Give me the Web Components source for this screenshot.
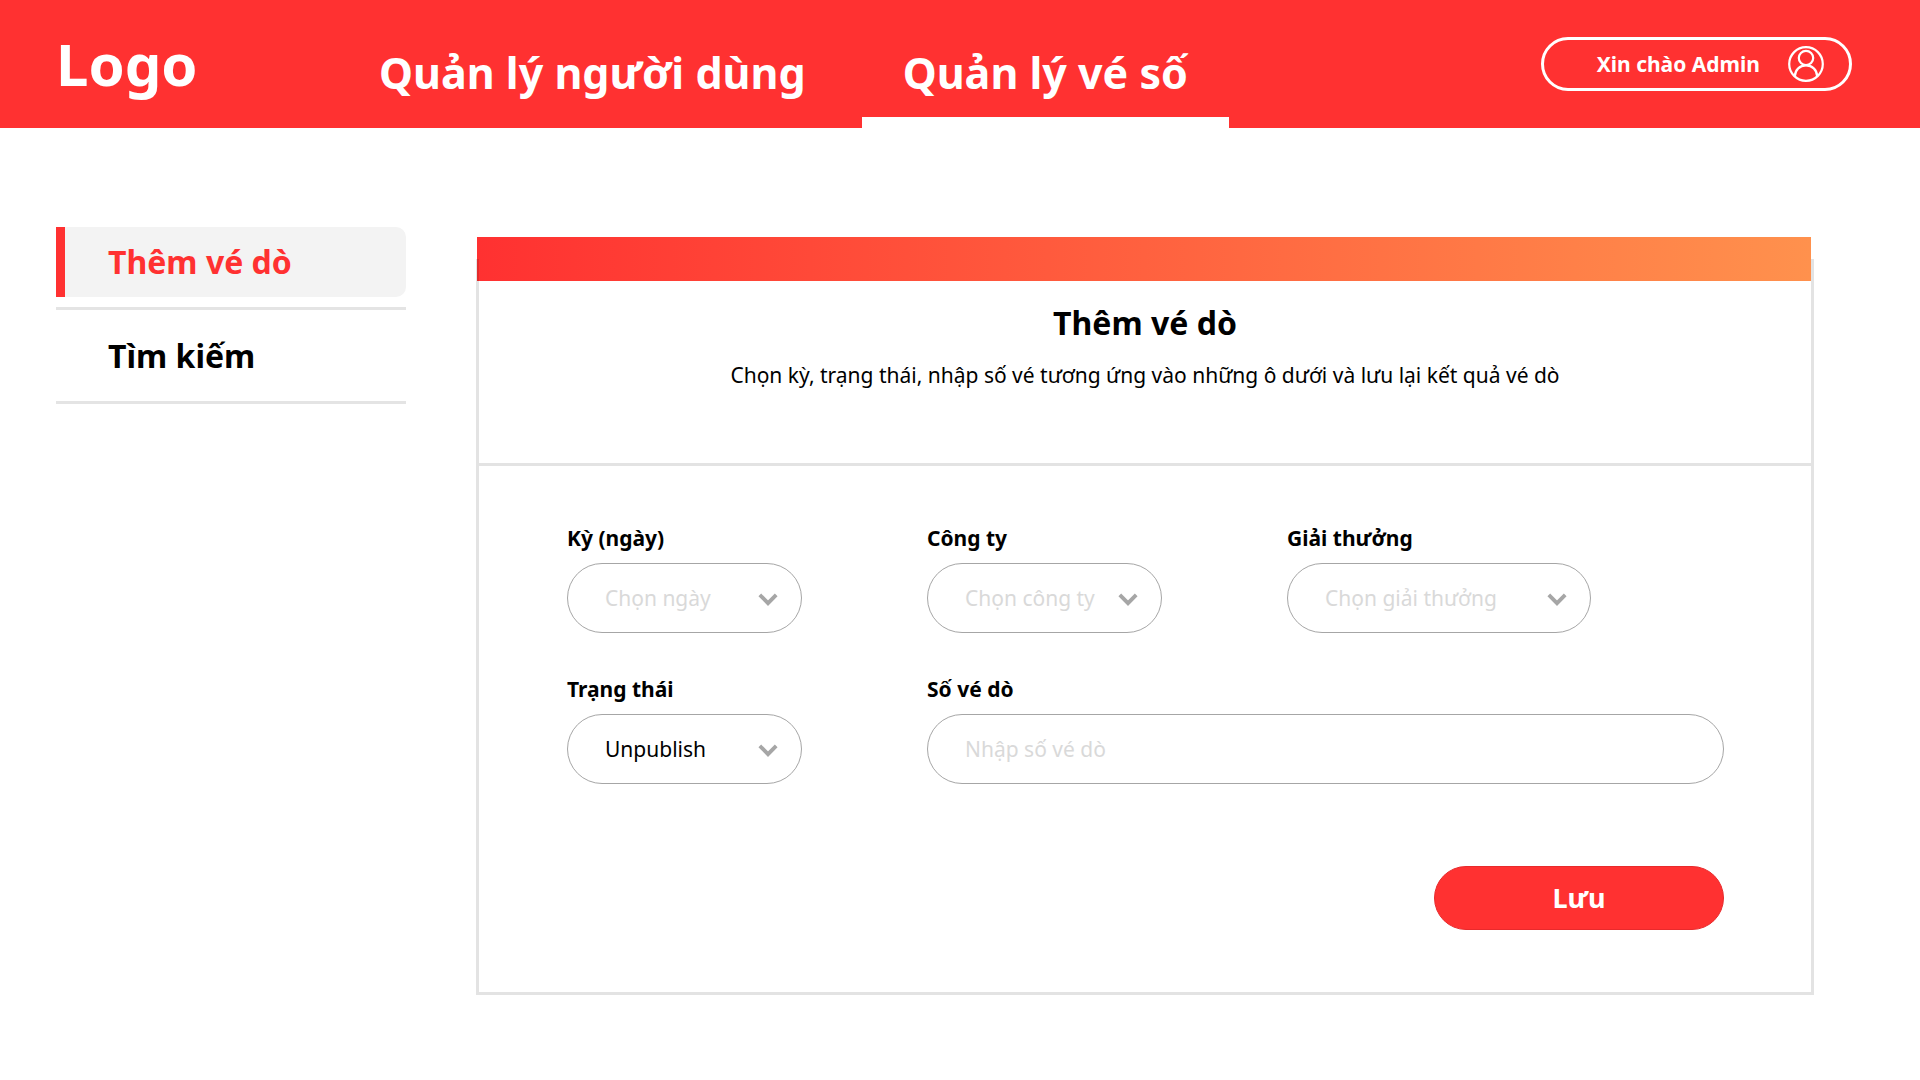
<!DOCTYPE html>
<html lang="vi">
<head>
<meta charset="utf-8">
<meta name="viewport" content="width=device-width, initial-scale=1">
<title>Quản lý vé số</title>
<style>
  :root {
    --red: #ff3131;
    --orange: #ff914d;
    --line: rgba(0, 0, 0, .11);
    --outline: #a6a6a6;
    --hint: #d9d9d9;
  }
  body {
    margin: 0;
    background: #fff;
    color: #000;
    font-family: "Noto Sans", "Open Sans", sans-serif;
  }
</style>
</head>
<body>
<lottery-app></lottery-app>

<script>
const define = (name, html, setup) => {
  const template = document.createElement('template');
  template.innerHTML = `<style>*, *::before { box-sizing: border-box; }</style>${html}`;
  customElements.define(name, class extends HTMLElement {
    constructor() {
      super();
      this.attachShadow({ mode: 'open' }).append(template.content.cloneNode(true));
    }
    connectedCallback() {
      if (setup) setup(this, this.shadowRoot);
    }
  });
};

define('nav-tab', `
  <style>
    :host { display: block; }
    a {
      display: block;
      padding: 28px 41px 0;
      border-bottom: 11px solid transparent;
      color: #fff;
      font-size: 43px;
      font-weight: 700;
      line-height: 89px;
      text-decoration: none;
      white-space: nowrap;
    }
    :host([active]) a { border-color: #fff; }
  </style>
  <a href="#"><slot></slot></a>`);

define('user-pill', `
  <style>
    :host { display: block; }
    button {
      display: flex;
      align-items: center;
      gap: 28px;
      height: 54px;
      padding: 0 25px 0 53px;
      border: 3px solid #fff;
      border-radius: 28px;
      background: none;
      color: #fff;
      font: 700 21px/30px "Noto Sans", "Open Sans", sans-serif;
      white-space: nowrap;
    }
    svg { display: block; width: 36px; height: 36px; }
  </style>
  <button type="button">
    <slot></slot>
    <svg viewBox="0 0 36 36" fill="none" stroke="#fff" stroke-width="2.2" aria-hidden="true">
      <circle cx="18" cy="18" r="16.8"/>
      <circle cx="18" cy="12" r="7.2"/>
      <path d="M6.8 30.4C7 23.6 12 19.4 18 19.4S29 23.6 29.2 30.4"/>
    </svg>
  </button>`);

define('app-header', `
  <style>
    :host {
      display: flex;
      align-items: center;
      height: 128px;
      padding: 0 68px 0 56px;
      background: var(--red);
      color: #fff;
    }
    .logo { flex: 0 0 282px; font-size: 58px; font-weight: 700; line-height: 80px; }
    nav { display: flex; gap: 15px; }
    user-pill { margin-left: auto; }
  </style>
  <div class="logo">Logo</div>
  <nav>
    <nav-tab>Quản lý người dùng</nav-tab>
    <nav-tab active>Quản lý vé số</nav-tab>
  </nav>
  <user-pill>Xin chào Admin</user-pill>`);

define('side-item', `
  <style>
    :host { display: block; padding-bottom: 10px; border-bottom: 3px solid #e4e4e4; }
    a {
      display: block;
      padding-left: 43px;
      border-left: 9px solid transparent;
      border-radius: 0 10px 10px 0;
      color: #000;
      font-size: 32px;
      font-weight: 700;
      line-height: 70px;
      text-decoration: none;
    }
    :host([active]) a { border-color: var(--red); background: #f3f3f3; color: var(--red); }
  </style>
  <a href="#"><slot></slot></a>`);

define('side-menu', `
  <style>
    :host { display: flex; flex-direction: column; gap: 11px; }
  </style>
  <side-item active>Thêm vé dò</side-item>
  <side-item>Tìm kiếm</side-item>`);

const fieldStyle = `
  <style>
    :host { display: block; }
    label { display: block; margin-bottom: 10px; font-size: 21px; font-weight: 700; line-height: 30px; }
    .box { display: grid; align-items: center; }
    .box > * { grid-area: 1 / 1; }
    select, input {
      width: 100%;
      height: 70px;
      margin: 0;
      padding: 0 37px;
      border: 1px solid var(--outline);
      border-radius: 35px;
      outline: 0;
      background: none;
      color: #000;
      font: 400 21px/30px "Noto Sans", "Open Sans", sans-serif;
      appearance: none;
    }
    select.empty { color: var(--hint); }
    input::placeholder { color: var(--hint); opacity: 1; }
    svg { justify-self: end; width: 20px; height: 14px; margin: 4px 24px 0 0; pointer-events: none; }
  </style>`;

define('select-field', `${fieldStyle}
  <label for="control"></label>
  <div class="box">
    <select id="control"><option></option></select>
    <svg viewBox="0 0 20 14" fill="none" stroke="#a6a6a6" stroke-width="3.8" aria-hidden="true">
      <path d="M1.8 1.8L10 10.2L18.2 1.8"/>
    </svg>
  </div>`, (host, root) => {
  root.querySelector('label').textContent = host.getAttribute('label');
  const value = host.getAttribute('value');
  root.querySelector('option').textContent = value || host.getAttribute('placeholder');
  root.querySelector('select').classList.toggle('empty', !value);
});

define('text-field', `${fieldStyle}
  <label for="control"></label>
  <div class="box"><input id="control" type="text"></div>`, (host, root) => {
  root.querySelector('label').textContent = host.getAttribute('label');
  root.querySelector('input').placeholder = host.getAttribute('placeholder');
});

define('form-card', `
  <style>
    :host { display: block; }
    .bar { height: 44px; margin: 0 3px 0 1px; background: linear-gradient(90deg, var(--red), var(--orange)); }
    .body {
      position: relative;
      margin-top: -22px;
      padding-top: 22px;
      border: 3px solid var(--line);
      border-top: 0;
    }
    header { padding: 20px 0 70px; border-bottom: 3px solid var(--line); text-align: center; }
    h1 { margin: 0; font-size: 32px; font-weight: 700; line-height: 44px; }
    p { margin: 12px 0 0; font-size: 21px; line-height: 36px; }
  </style>
  <div class="bar"></div>
  <section class="body">
    <header>
      <h1><slot name="title"></slot></h1>
      <p><slot name="hint"></slot></p>
    </header>
    <slot></slot>
  </section>`);

define('ticket-form', `
  <style>
    :host { display: block; }
    form {
      display: grid;
      grid-template-columns: 235px 235px 1fr;
      gap: 41px 125px;
      padding: 57px 87px 62px 88px;
    }
    .prize { width: 304px; }
    .numbers { grid-column: 2 / -1; }
    button {
      grid-column: 1 / -1;
      justify-self: end;
      width: 290px;
      height: 64px;
      margin-top: 41px;
      border: 1px solid #e82a2c;
      border-radius: 32px;
      background: var(--red);
      color: #fff;
      font: 700 27px/36px "Noto Sans", "Open Sans", sans-serif;
    }
  </style>
  <form>
    <select-field label="Kỳ (ngày)" placeholder="Chọn ngày"></select-field>
    <select-field label="Công ty" placeholder="Chọn công ty"></select-field>
    <select-field class="prize" label="Giải thưởng" placeholder="Chọn giải thưởng"></select-field>
    <select-field label="Trạng thái" value="Unpublish"></select-field>
    <text-field class="numbers" label="Số vé dò" placeholder="Nhập số vé dò"></text-field>
    <button type="button">Lưu</button>
  </form>`);

define('lottery-app', `
  <style>
    :host { display: block; }
    main { display: flex; align-items: flex-start; gap: 70px; padding: 99px 106px 80px 56px; }
    side-menu { flex: 0 0 350px; }
    form-card { flex: 1; margin-top: 10px; }
  </style>
  <app-header></app-header>
  <main>
    <side-menu></side-menu>
    <form-card>
      <span slot="title">Thêm vé dò</span>
      <span slot="hint">Chọn kỳ, trạng thái, nhập số vé tương ứng vào những ô dưới và lưu lại kết quả vé dò</span>
      <ticket-form></ticket-form>
    </form-card>
  </main>`);
</script>
</body>
</html>
